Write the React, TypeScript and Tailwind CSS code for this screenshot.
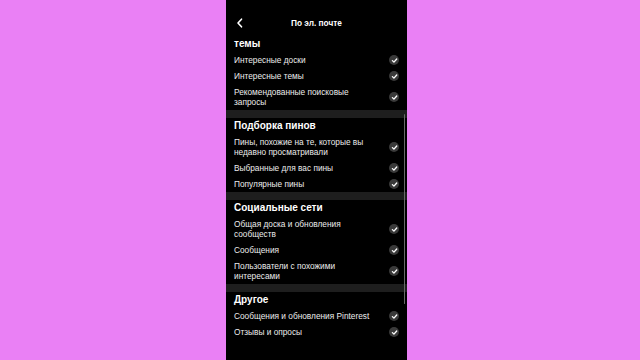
import React from 'react';

type Item = { label: string };
type Section = { title: string; items: Item[] };

const sections: Section[] = [
  {
    title: 'темы',
    items: [
      { label: 'Интересные доски' },
      { label: 'Интересные темы' },
      { label: 'Рекомендованные поисковые запросы' },
    ],
  },
  {
    title: 'Подборка пинов',
    items: [
      { label: 'Пины, похожие на те, которые вы недавно просматривали' },
      { label: 'Выбранные для вас пины' },
      { label: 'Популярные пины' },
    ],
  },
  {
    title: 'Социальные сети',
    items: [
      { label: 'Общая доска и обновления сообществ' },
      { label: 'Сообщения' },
      { label: 'Пользователи с похожими интересами' },
    ],
  },
  {
    title: 'Другое',
    items: [
      { label: 'Сообщения и обновления Pinterest' },
      { label: 'Отзывы и опросы' },
    ],
  },
];

function Check() {
  return (
    <div className="w-[10px] h-[10px] rounded-full bg-[#3a3a3a] flex items-center justify-center shrink-0">
      <svg width="7" height="7" viewBox="0 0 10 10" fill="none">
        <path d="M2 5.2 L4.2 7.3 L8.2 2.8" stroke="white" strokeWidth="1.9" strokeLinecap="round" strokeLinejoin="round" />
      </svg>
    </div>
  );
}

export default function App() {
  return (
    <div
      className="w-[640px] h-[360px] bg-[#ea80f5] flex overflow-hidden"
      style={{ fontFamily: '"Liberation Sans", Arial, sans-serif' }}
    >
      <div className="ml-[226px] w-[181px] h-full bg-black relative flex flex-col">
        {/* Nav bar */}
        <div className="h-[36px] pt-[10px] px-[10px] flex items-start">
          <div className="h-[26px] w-full flex items-center relative">
            <svg width="8" height="10" viewBox="0 0 8 10" fill="none">
              <path d="M5.5 1.2 L2 5 L5.5 8.8" stroke="white" strokeWidth="1.6" strokeLinecap="round" strokeLinejoin="round" />
            </svg>
            <div className="absolute left-0 right-0 text-center text-white font-bold text-[8.3px] leading-none pointer-events-none">
              По эл. почте
            </div>
          </div>
        </div>

        {sections.map((s, i) => (
          <div key={s.title}>
            {i > 0 && <div className="h-[8px] bg-[#1e1e1e]" />}
            <div className="h-[16px] pl-[8px] flex items-center text-white font-bold text-[10px] leading-none">
              {s.title}
            </div>
            {s.items.map((it) => (
              <div key={it.label} className="pl-[8px] pr-[8px] py-[3px] flex items-center justify-between">
                <div className="text-[#ececec] text-[8.3px] leading-[10px] w-[140px]">{it.label}</div>
                <Check />
              </div>
            ))}
          </div>
        ))}

        {/* scrollbar */}
        <div className="absolute right-[2px] top-[114px] w-[1.5px] h-[190px] bg-[#6a6a6a] rounded-full" />
      </div>
    </div>
  );
}
